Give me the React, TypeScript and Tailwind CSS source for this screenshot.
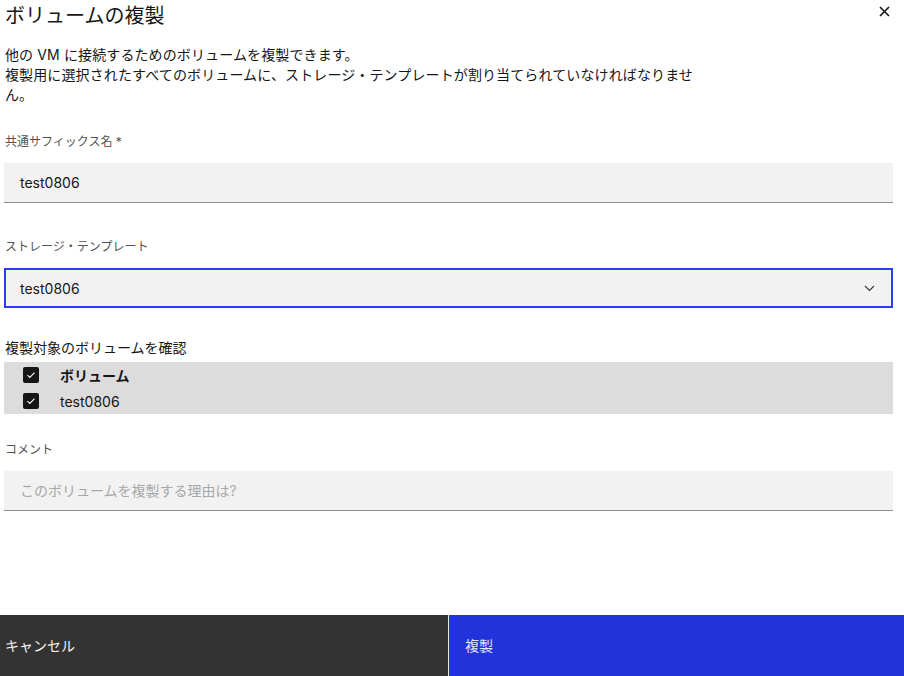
import React from "react";

const FONT = { fontFamily: '"Inter", "Noto Sans CJK JP", sans-serif' };

function Check() {
  return (
    <span className="flex h-4 w-4 items-center justify-center rounded-[2px] bg-[#161616]">
      <svg width="10" height="8" viewBox="0 0 10 8" fill="none">
        <path d="M1.5 4.2 L3.8 6.4 L8.5 1.6" stroke="#ffffff" strokeWidth="1.1" />
      </svg>
    </span>
  );
}

export default function App() {
  return (
    <div className="flex h-[676px] w-[904px] flex-col bg-white text-[#161616]" style={FONT}>
      <div className="flex-1 pl-[4px] pr-[11px]">
        <div className="flex items-start justify-between">
          <h1 className="pl-[1px] pt-[2px] text-[20px] leading-[28px] font-normal">ボリュームの複製</h1>
          <button className="mr-[3px] mt-[5px] flex h-[12px] w-[12px] items-center justify-center">
            <svg width="11" height="11" viewBox="0 0 11 11">
              <path d="M1 1 L10 10 M10 1 L1 10" stroke="#161616" strokeWidth="1.6" />
            </svg>
          </button>
        </div>
        <p className="mt-[15px] max-w-[696px] pl-[1px] text-[14px] leading-[20px] tracking-[0.12px]">
          他の VM に接続するためのボリュームを複製できます。
          <br />
          複製用に選択されたすべてのボリュームに、ストレージ・テンプレートが割り当てられていなければなりません。
        </p>

        <div className="mt-[29px] pl-[1px] text-[12px] leading-[16px] text-[#525252]">共通サフィックス名 *</div>
        <div className="mt-[13px] flex h-[40px] items-center border-b border-[#8d8d8d] bg-[#f2f2f2] pl-[16px] text-[14px]">
          test0806
        </div>

        <div className="mt-[36px] pl-[1px] text-[12px] leading-[16px] text-[#525252]">ストレージ・テンプレート</div>
        <div className="mt-[13px] flex h-[40px] items-center justify-between border-2 border-[#2a3ef0] bg-[#f2f2f2] pl-[14px] pr-[16px] text-[14px]">
          <span>test0806</span>
          <svg width="11" height="7" viewBox="0 0 11 7" fill="none">
            <path d="M1 1 L5.5 5.5 L10 1" stroke="#393939" strokeWidth="1.2" />
          </svg>
        </div>

        <div className="mt-[30px] pl-[1px] text-[14px] leading-[20px]">複製対象のボリュームを確認</div>
        <div className="mt-[4px] bg-[#dcdcdc] text-[14px]">
          <div className="flex h-[26px] items-center">
            <div className="w-[56px] pl-[19px]">
              <Check />
            </div>
            <span className="font-bold">ボリューム</span>
          </div>
          <div className="flex h-[26px] items-center">
            <div className="w-[56px] pl-[19px]">
              <Check />
            </div>
            <span>test0806</span>
          </div>
        </div>

        <div className="mt-[28px] pl-[1px] text-[12px] leading-[16px] text-[#525252]">コメント</div>
        <div className="mt-[13px] flex h-[40px] items-center border-b border-[#8d8d8d] bg-[#f2f2f2] pl-[16px] text-[14px] text-[#a8a8a8]">
          このボリュームを複製する理由は?
        </div>
      </div>

      <div className="flex h-[61px] text-[14px]">
        <div className="flex w-[448px] items-center bg-[#333333] pl-[5px] text-[#f4f4f4]">キャンセル</div>
        <div className="flex flex-1 items-center border-l border-[#e6e6e6] bg-[#2134dc] pl-[16px] text-[#e2e5fb]">複製</div>
      </div>
    </div>
  );
}
